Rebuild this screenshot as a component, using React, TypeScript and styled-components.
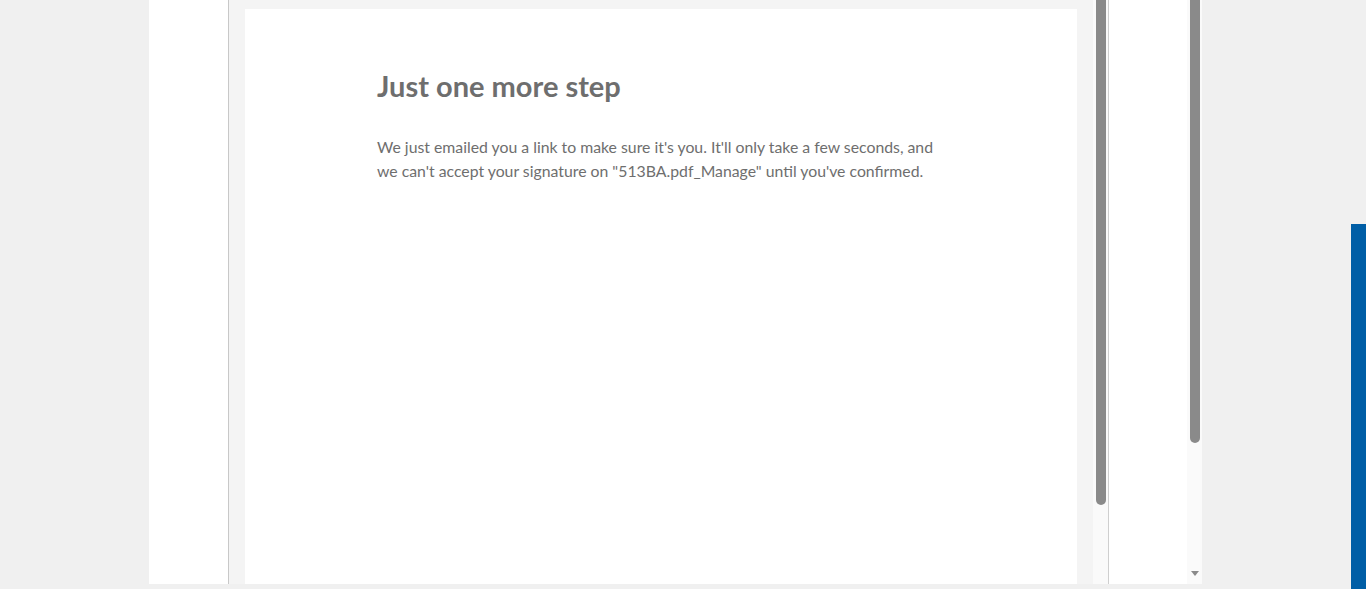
import React from "react";
import styled, { createGlobalStyle } from "styled-components";

const Global = createGlobalStyle`
  html, body { margin: 0; padding: 0; height: 100%; }
  body { background: #f0f0f0; font-family: Lato, "Open Sans", sans-serif; overflow: hidden; }
  #root { height: 100%; }
`;

const Screen = styled.div`
  display: flex;
  justify-content: space-between;
  align-items: flex-start;
  height: 589px;
  padding-left: 149px;
  box-sizing: border-box;
`;

const Frame = styled.div`
  display: flex;
  width: 1053px;
  height: 584px;
  background: #ffffff;
  flex-shrink: 0;
`;

const LeftGutter = styled.div`
  width: 79px;
  border-right: 1px solid #c8c8c8;
  flex-shrink: 0;
`;

const Viewer = styled.div`
  flex: 1;
  min-width: 0;
  display: flex;
  background: #f4f4f4;
  border-right: 1px solid #cfcfcf;
`;

const Canvas = styled.div`
  flex: 1;
  min-width: 0;
  padding: 9px 16px 0 16px;
  display: flex;
`;

const Card = styled.div`
  flex: 1;
  min-width: 0;
  background: #ffffff;
  padding: 60px 100px 0 132px;
  box-sizing: border-box;
`;

const Title = styled.h1`
  margin: 0;
  font-family: Lato, "Open Sans", sans-serif;
  font-weight: 700;
  font-size: 29px;
  line-height: 34px;
  color: #6e6e6e;
`;

const Message = styled.p`
  margin: 32px 0 0 0;
  max-width: 565px;
  font-family: Lato, "Open Sans", sans-serif;
  font-size: 15.8px;
  line-height: 24px;
  color: #6e6e6e;
`;

const Track = styled.div<{ $width: number }>`
  width: ${(p) => p.$width}px;
  flex-shrink: 0;
  background: #fafafa;
  display: flex;
  flex-direction: column;
  align-items: center;
  position: relative;
`;

const Thumb = styled.div<{ $height: number }>`
  width: 10px;
  height: ${(p) => p.$height}px;
  background: #8a8a8a;
  border-radius: 0 0 5px 5px;
`;

const SidePane = styled.div`
  width: 78px;
  flex-shrink: 0;
  background: #ffffff;
`;

const ArrowDown = styled.div`
  position: absolute;
  bottom: 8px;
  left: 50%;
  transform: translateX(-50%);
  width: 0;
  height: 0;
  border-left: 4.5px solid transparent;
  border-right: 4.5px solid transparent;
  border-top: 5px solid #8a8a8a;
`;

const BlueTab = styled.div`
  width: 15px;
  height: 365px;
  margin-top: 224px;
  background: #005ea6;
  flex-shrink: 0;
`;

export default function App() {
  return (
    <>
      <Global />
      <Screen>
        <Frame>
          <LeftGutter />
          <Viewer>
            <Canvas>
              <Card>
                <Title>Just one more step</Title>
                <Message>
                  We just emailed you a link to make sure it's you. It'll only take a few seconds, and we can't accept your signature on "513BA.pdf_Manage" until you've confirmed.
                </Message>
              </Card>
            </Canvas>
            <Track $width={15}>
              <Thumb $height={505} />
            </Track>
          </Viewer>
          <SidePane />
          <Track $width={15}>
            <Thumb $height={443} />
            <ArrowDown />
          </Track>
        </Frame>
        <BlueTab />
      </Screen>
    </>
  );
}
